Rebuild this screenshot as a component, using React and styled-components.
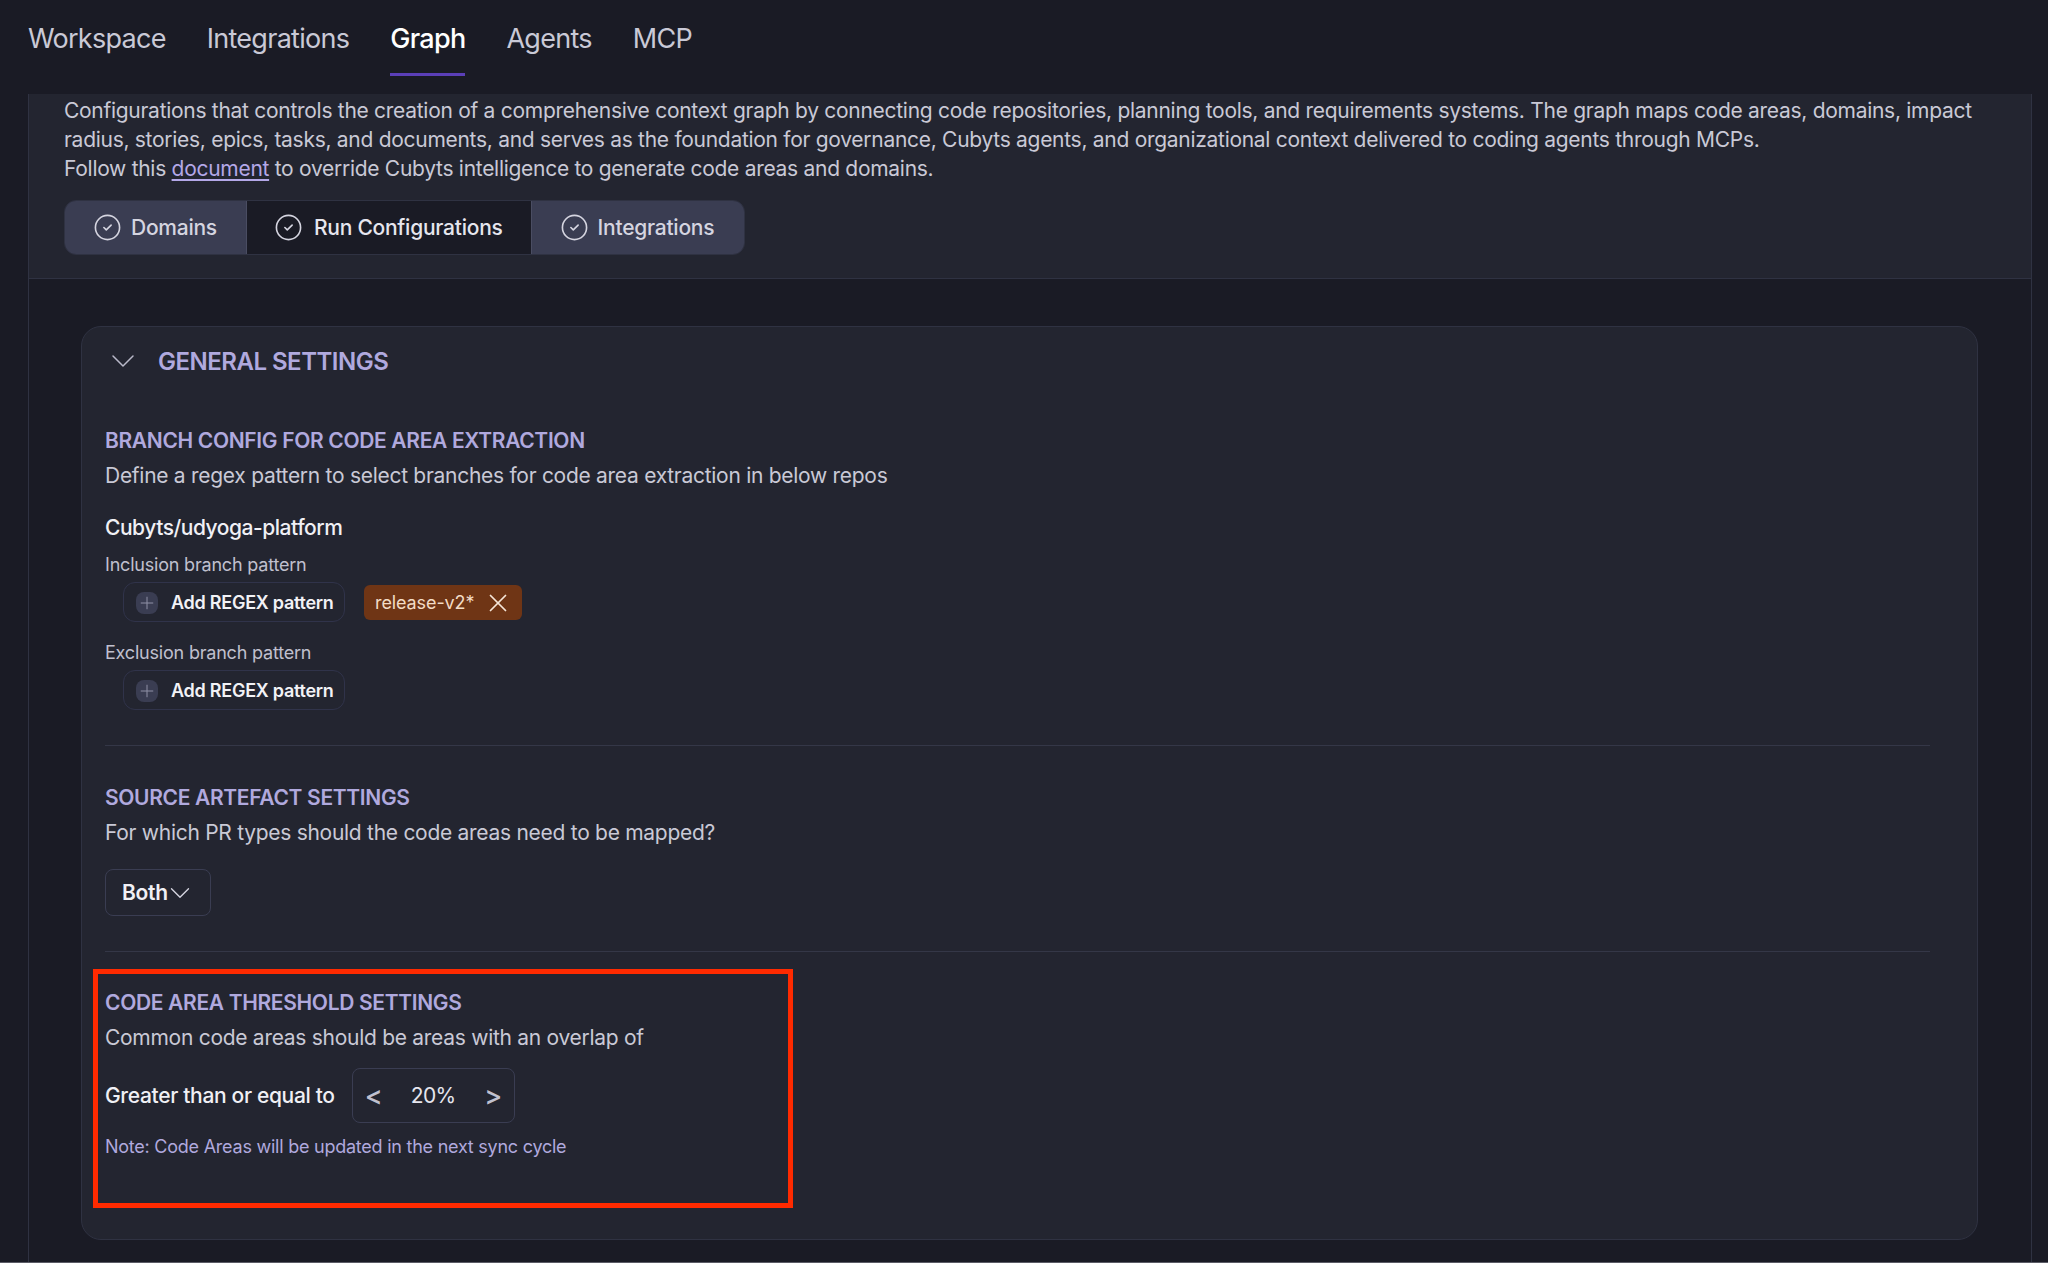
import React from "react";
import styled, { createGlobalStyle } from "styled-components";
import { ChevronDown, CircleCheck, Plus, X } from "lucide-react";

const GlobalStyle = createGlobalStyle`
  html, body {
    margin: 0;
    padding: 0;
    background: #1a1b25;
    font-family: Inter, "Liberation Sans", sans-serif;
    -webkit-font-smoothing: antialiased;
  }
  * { box-sizing: border-box; }
`;

const Page = styled.div`
  height: 1263px;
  overflow: hidden;
  display: flex;
  flex-direction: column;
  border-bottom: 1px solid #5b5c66;
`;

const Nav = styled.nav`
  height: 94px;
  flex: none;
  display: flex;
  gap: 41px;
  padding: 0 0 18px 28px;
`;

const NavTab = styled.a`
  display: flex;
  align-items: center;
  padding-top: 3px;
  font-size: 27px;
  letter-spacing: -0.72px;
  font-weight: ${(p) => (p.$active ? 500 : 400)};
  color: ${(p) => (p.$active ? "#ffffff" : "#c9c9d6")};
  border-bottom: 3px solid ${(p) => (p.$active ? "#5b3fb8" : "transparent")};
`;

const Panel = styled.main`
  flex: 1;
  margin: 0 16px 0 28px;
  border-left: 1px solid #2f3242;
  border-right: 1px solid #2f3242;
`;

const Intro = styled.section`
  background: #232530;
  padding: 2px 35px 23px;
  border-bottom: 1px solid #2f3242;
`;

const IntroText = styled.p`
  margin: 0;
  font-size: 21px;
  line-height: 29px;
  letter-spacing: -0.285px;
  color: #c9c9d6;
`;

const DocLink = styled.a`
  color: #b4a8e8;
  text-decoration: underline;
  text-underline-offset: 3px;
`;

const Steps = styled.div`
  display: inline-flex;
  margin-top: 17px;
  height: 55px;
  border-radius: 12px;
  overflow: hidden;
  border: 1px solid #2f3242;
  vertical-align: top;
`;

const Step = styled.div`
  display: flex;
  align-items: center;
  gap: ${(p) => (p.$active ? "11px" : "9px")};
  padding: 0 ${(p) => (p.$active ? "28px" : "29px")} 0 ${(p) => (p.$active ? "27px" : "28px")};
  font-size: 21px;
  font-weight: 500;
  letter-spacing: -0.25px;
  color: ${(p) => (p.$active ? "#e6e6ee" : "#d5d5e0")};
  background: ${(p) => (p.$active ? "#1a1b25" : "#3a3d52")};
  border-left: ${(p) => (p.$active ? "1px solid #4a4d62" : "none")};
  border-right: ${(p) => (p.$active ? "1px solid #4a4d62" : "none")};

  &:last-child {
    padding-right: 30px;
  }

  svg {
    width: 29px;
    height: 29px;
    stroke-width: 1.35;
    color: #d5d5e0;
  }
`;

const Body = styled.div`
  padding: 47px 53px 0 52px;
`;

const Card = styled.section`
  background: #232530;
  border: 1px solid #2f3242;
  border-radius: 20px;
  padding-bottom: 80px;
`;

const CardHeader = styled.header`
  height: 68px;
  display: flex;
  align-items: center;
  gap: 15px;
  padding-left: 21px;
  font-size: 24px;
  font-weight: 600;
  letter-spacing: -0.5px;
  color: #b0a9de;

  svg {
    width: 40px;
    height: 40px;
    stroke-width: 0.9;
    color: #b9b9c9;
  }
`;

const CardContent = styled.div`
  padding: 33px 47px 0 23px;
`;

const Section = styled.div`
  position: relative;
  display: flow-root;
`;

const SectionTitle = styled.h3`
  margin: ${(p) => p.$top || 0}px 0 0;
  font-size: 21px;
  line-height: 26px;
  font-weight: 600;
  letter-spacing: -0.34px;
  color: #b0a9de;
`;

const SectionText = styled.p`
  margin: 8px 0 0;
  font-size: 21px;
  line-height: 28px;
  letter-spacing: -0.28px;
  color: #c9c9d6;
`;

const RepoName = styled.div`
  margin-top: 24px;
  font-size: 21px;
  line-height: 28px;
  font-weight: 500;
  letter-spacing: -0.47px;
  color: #f0f0f5;
`;

const FieldLabel = styled.div`
  margin-top: ${(p) => p.$top}px;
  font-size: 18px;
  line-height: 24px;
  letter-spacing: -0.2px;
  color: #c0c0ce;
`;

const PatternRow = styled.div`
  display: flex;
  align-items: center;
  gap: 19px;
  margin-top: 5px;
  padding-left: 18px;
`;

const AddButton = styled.button`
  display: flex;
  align-items: center;
  gap: 13px;
  height: 40px;
  width: 222px;
  padding: 1px 0 0 12px;
  background: transparent;
  border: 1px solid #30334a;
  border-radius: 12px;
  font-family: inherit;
  font-size: 18px;
  font-weight: 600;
  letter-spacing: -0.26px;
  color: #f2f2f6;
`;

const PlusBadge = styled.span`
  width: 22px;
  height: 22px;
  border-radius: 8px;
  background: #3a3d52;
  display: flex;
  align-items: center;
  justify-content: center;
  color: #8f91a6;

  svg {
    width: 20px;
    height: 20px;
    stroke-width: 1.2;
  }
`;

const PatternTag = styled.span`
  display: flex;
  align-items: center;
  gap: 9px;
  height: 35px;
  width: 158px;
  padding: 1px 0 0 11px;
  border-radius: 6px;
  background: #6f3515;
  font-size: 18px;
  letter-spacing: -0.1px;
  color: #f3dcc6;

  svg {
    width: 30px;
    height: 30px;
    stroke-width: 1.4;
    color: #f5e6d8;
  }
`;

const Divider = styled.hr`
  margin: 35px 0 0;
  height: 1px;
  border: 0;
  background: #343747;
`;

const SelectBox = styled.button`
  display: flex;
  align-items: center;
  margin-top: 22px;
  width: 106px;
  height: 47px;
  padding: 0 0 0 16px;
  background: transparent;
  border: 1px solid #3a3d52;
  border-radius: 8px;
  font-family: inherit;
  font-size: 21px;
  font-weight: 600;
  letter-spacing: -0.3px;
  color: #f0f0f5;

  svg {
    flex: none;
    width: 34px;
    height: 34px;
    margin-left: -5px;
    stroke-width: 0.95;
    color: #d5d5e0;
  }
`;

const ThresholdRow = styled.div`
  display: flex;
  align-items: center;
  gap: 17px;
  margin-top: 16px;
  font-size: 21px;
  font-weight: 500;
  letter-spacing: -0.33px;
  color: #f0f0f5;
`;

const Stepper = styled.div`
  width: 163px;
  height: 55px;
  display: flex;
  align-items: center;
  justify-content: space-between;
  padding: 0 12px;
  border: 1px solid #3a3d52;
  border-radius: 8px;
  font-size: 21px;
  font-weight: 400;
  letter-spacing: -0.6px;
  color: #e6e6ee;
`;

const StepArrow = styled.span`
  font-size: 27px;
  font-weight: 500;
  color: #c0c0ce;
`;

const Note = styled.div`
  margin-top: 12px;
  font-size: 18px;
  line-height: 24px;
  letter-spacing: -0.24px;
  color: #b0a9de;
`;

const Highlight = styled.div`
  position: absolute;
  top: 17px;
  left: -12px;
  width: 700px;
  height: 239px;
  border: 5px solid #ff2a00;
  pointer-events: none;
`;

const navItems = ["Workspace", "Integrations", "Graph", "Agents", "MCP"];

function AddRegex() {
  return (
    <AddButton>
      <PlusBadge>
        <Plus />
      </PlusBadge>
      Add REGEX pattern
    </AddButton>
  );
}

export default function App() {
  return (
    <Page>
      <GlobalStyle />
      <Nav>
        {navItems.map((item) => (
          <NavTab key={item} $active={item === "Graph"}>
            {item}
          </NavTab>
        ))}
      </Nav>
      <Panel>
        <Intro>
          <IntroText>
            Configurations that controls the creation of a comprehensive context graph by connecting code
            repositories, planning tools, and requirements systems. The graph maps code areas, domains, impact
            <br />
            radius, stories, epics, tasks, and documents, and serves as the foundation for governance, Cubyts
            agents, and organizational context delivered to coding agents through MCPs.
            <br />
            Follow this <DocLink>document</DocLink> to override Cubyts intelligence to generate code areas and
            domains.
          </IntroText>
          <Steps>
            <Step>
              <CircleCheck />
              Domains
            </Step>
            <Step $active>
              <CircleCheck />
              Run Configurations
            </Step>
            <Step>
              <CircleCheck />
              Integrations
            </Step>
          </Steps>
        </Intro>
        <Body>
          <Card>
            <CardHeader>
              <ChevronDown />
              GENERAL SETTINGS
            </CardHeader>
            <CardContent>
              <SectionTitle>BRANCH CONFIG FOR CODE AREA EXTRACTION</SectionTitle>
              <SectionText>Define a regex pattern to select branches for code area extraction in below repos</SectionText>
              <RepoName>Cubyts/udyoga-platform</RepoName>
              <FieldLabel $top={11}>Inclusion branch pattern</FieldLabel>
              <PatternRow>
                <AddRegex />
                <PatternTag>
                  release-v2*
                  <X />
                </PatternTag>
              </PatternRow>
              <FieldLabel $top={19}>Exclusion branch pattern</FieldLabel>
              <PatternRow>
                <AddRegex />
              </PatternRow>
              <Divider />
              <SectionTitle $top={39}>SOURCE ARTEFACT SETTINGS</SectionTitle>
              <SectionText>For which PR types should the code areas need to be mapped?</SectionText>
              <SelectBox>
                Both
                <ChevronDown />
              </SelectBox>
              <Divider />
              <Section>
                <Highlight />
                <SectionTitle $top={38}>CODE AREA THRESHOLD SETTINGS</SectionTitle>
                <SectionText>Common code areas should be areas with an overlap of</SectionText>
                <ThresholdRow>
                  Greater than or equal to
                  <Stepper>
                    <StepArrow>&lt;</StepArrow>
                    20%
                    <StepArrow>&gt;</StepArrow>
                  </Stepper>
                </ThresholdRow>
                <Note>Note: Code Areas will be updated in the next sync cycle</Note>
              </Section>
            </CardContent>
          </Card>
        </Body>
      </Panel>
    </Page>
  );
}
